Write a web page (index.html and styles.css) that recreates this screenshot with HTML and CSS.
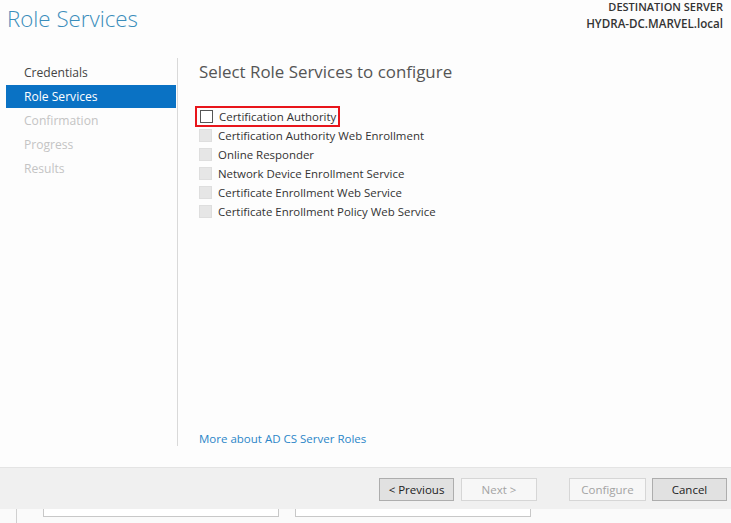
FILE: index.html
```html
<!DOCTYPE html>
<html>
<head>
<meta charset="utf-8">
<link rel="stylesheet" href="styles.css">
</head>
<body>
<div class="window">
  <header class="header">
    <h1 class="title">Role Services</h1>
    <div class="dest">
      <div class="dest-label">DESTINATION SERVER</div>
      <div class="dest-name">HYDRA-DC.MARVEL.local</div>
    </div>
  </header>
  <div class="main">
    <nav class="nav">
      <div class="nav-item">Credentials</div>
      <div class="nav-item active">Role Services</div>
      <div class="nav-item disabled">Confirmation</div>
      <div class="nav-item disabled">Progress</div>
      <div class="nav-item disabled">Results</div>
    </nav>
    <section class="content">
      <h2 class="heading">Select Role Services to configure</h2>
      <ul class="list">
        <li class="row highlight"><span class="box enabled"></span><span class="label">Certification Authority</span></li>
        <li class="row"><span class="box"></span><span class="label">Certification Authority Web Enrollment</span></li>
        <li class="row"><span class="box"></span><span class="label">Online Responder</span></li>
        <li class="row"><span class="box"></span><span class="label">Network Device Enrollment Service</span></li>
        <li class="row"><span class="box"></span><span class="label">Certificate Enrollment Web Service</span></li>
        <li class="row"><span class="box"></span><span class="label">Certificate Enrollment Policy Web Service</span></li>
      </ul>
      <a class="more" href="#">More about AD CS Server Roles</a>
    </section>
  </div>
  <footer class="footer">
    <button class="btn">&lt; Previous</button>
    <button class="btn off next">Next &gt;</button>
    <button class="btn off configure">Configure</button>
    <button class="btn cancel">Cancel</button>
  </footer>
  <div class="under">
    <div class="under-line"></div>
    <div class="under-box b1"></div>
    <div class="under-box b2"></div>
  </div>
</div>
</body>
</html>
```

FILE: styles.css
```css
* { box-sizing: border-box; }
html, body { margin: 0; padding: 0; }
body {
  width: 731px;
  height: 523px;
  overflow: hidden;
  background: #fdfdfd;
  font-family: "Open Sans", "Noto Sans", "Liberation Sans", sans-serif;
  color: #333;
}
.window { display: flex; flex-direction: column; height: 523px; }
.header {
  display: flex;
  justify-content: space-between;
  height: 58px;
  padding: 0 8px 0 7px;
}
.title {
  margin: 3px 0 0 0;
  font-size: 22.3px;
  line-height: 32px;
  font-weight: 300;
  color: #3a8dbb;
}
.dest { text-align: right; padding-top: 1px; }
.dest-label {
  font-size: 11px;
  font-weight: 600;
  line-height: 12px;
  color: #333;
}
.dest-name {
  font-size: 11.6px;
  font-weight: 600;
  line-height: 14px;
  margin-top: 4px;
  color: #333;
}
.main { display: flex; height: 409px; }
.nav {
  width: 172px;
  margin-left: 6px;
  height: 388px;
  border-right: 1px solid #d9d9d9;
  padding-top: 3px;
}
.nav-item {
  width: 170px;
  height: 24px;
  line-height: 24px;
  padding-left: 18px;
  font-size: 12.1px;
  color: #444;
}
.nav-item.active { background: #0a72c4; color: #fff; height: 23px; line-height: 23px; margin-bottom: 1px; }
.nav-item.disabled { color: #c4c4c4; }
.content {
  display: flex;
  flex-direction: column;
  height: 388px;
  padding-left: 21px;
}
.heading {
  margin: 2px 0 0 0;
  font-size: 16.9px;
  line-height: 24px;
  font-weight: 400;
  color: #555;
}
.list { list-style: none; margin: 23px 0 0 0; padding: 0; }
.row {
  display: flex;
  align-items: center;
  height: 19px;
  font-size: 11.45px;
  color: #333;
}
.row.highlight {
  width: 143px;
  margin-left: -3px;
  padding-left: 4px;
  outline: 2px solid #e8151b;
  outline-offset: -1px;
}
.box {
  width: 13px;
  height: 13px;
  margin-right: 6px;
  flex: none;
  background: #e6e6e6;
  border: 1px solid #dedede;
}
.box.enabled { background: #fff; border: 1px solid #555; }
.more {
  margin-top: auto;
  margin-bottom: -1px;
  font-size: 11.5px;
  line-height: 16px;
  color: #2b86c8;
  text-decoration: none;
}
.footer {
  display: flex;
  justify-content: flex-end;
  align-items: flex-start;
  height: 42px;
  background: #f0f0f0;
  border-top: 1px solid #e4e4e4;
  padding: 10px 4px 0 0;
}
.btn {
  width: 75px;
  height: 23px;
  margin-left: 7px;
  padding: 0;
  font-family: inherit;
  font-size: 11.5px;
  color: #222;
  background: #e1e1e1;
  border: 1px solid #adadad;
}
.btn.off { background: #f7f7f7; border-color: #d6d6d6; color: #a3a3a3; }
.btn.next { width: 76px; }
.btn.configure { width: 77px; margin-left: 32px; }
.btn.cancel { margin-left: 6px; }
.under {
  display: flex;
  height: 14px;
  background: #fafafa;
}
.under-line { width: 1px; margin-left: 16px; background: #d0d0d0; }
.under-box {
  height: 8px;
  border: 1px solid #c8c8c8;
  border-top: none;
  background: #fff;
}
.b1 { width: 236px; margin-left: 26px; }
.b2 { width: 236px; margin-left: 16px; }
```
